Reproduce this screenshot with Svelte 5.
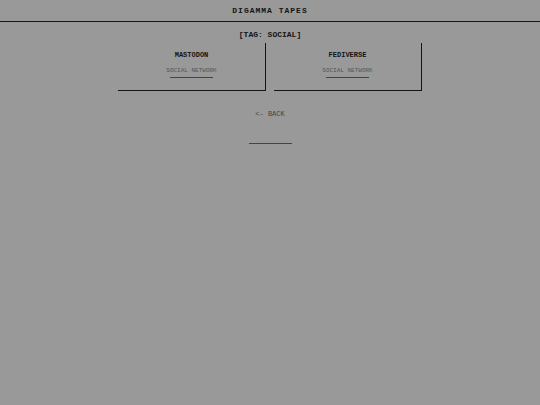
<script lang="ts">
  interface Entry { name: string; kind: string; href: string; }

  const tag = 'SOCIAL';
  const entries: Entry[] = [
    { name: 'MASTODON',  kind: 'SOCIAL NETWORK', href: '#mastodon' },
    { name: 'FEDIVERSE', kind: 'SOCIAL NETWORK', href: '#fediverse' },
  ];
</script>

<header>
  <h1>DIGAMMA TAPES</h1>
</header>

<main>
  <h2>[TAG: {tag}]</h2>

  <div class="cards">
    {#each entries as e}
      <article class="card">
        <h3><a href={e.href}>{e.name}</a></h3>
        <p>{e.kind}</p>
        <hr />
      </article>
    {/each}
  </div>

  <a class="back" href="#home">&lt;- BACK</a>
</main>

<footer>
  <hr />
</footer>

<style>
  :global(body) {
    margin: 0;
    background: #999;
    color: #141414;
    font-family: "Courier New", "Liberation Mono", monospace;
  }

  h1, h2, h3, p { margin: 0; }
  a { color: inherit; text-decoration: none; }

  header {
    padding: 6px 0 5px;
    border-bottom: 1px solid #141414;
    text-align: center;
  }
  h1 { font-size: 8px; line-height: 10px; letter-spacing: 1px; }

  main {
    display: flex;
    flex-direction: column;
    align-items: center;
    padding: 8px 8px 0;
  }
  h2 { font-size: 8px; line-height: 10px; }

  .cards {
    display: grid;
    grid-template-columns: 1fr 1fr;
    gap: 8px;
    width: 100%;
    max-width: 304px;
    margin-top: 3px;
  }
  .card {
    padding: 7px 8px 12px;
    border-right: 1px solid #141414;
    border-bottom: 1px solid #141414;
    text-align: center;
  }
  h3 { font-size: 7px; line-height: 10px; }
  p  { margin-top: 6px; font-size: 6px; line-height: 10px; color: #555; }

  hr {
    width: 43px;
    height: 1px;
    margin: 0 auto;
    border: 0;
    background: #444;
  }
  .card hr { margin-top: 1px; }

  .back { margin-top: 18px; font-size: 7px; line-height: 10px; color: #444; }

  footer { padding: 24px 0; }
</style>
